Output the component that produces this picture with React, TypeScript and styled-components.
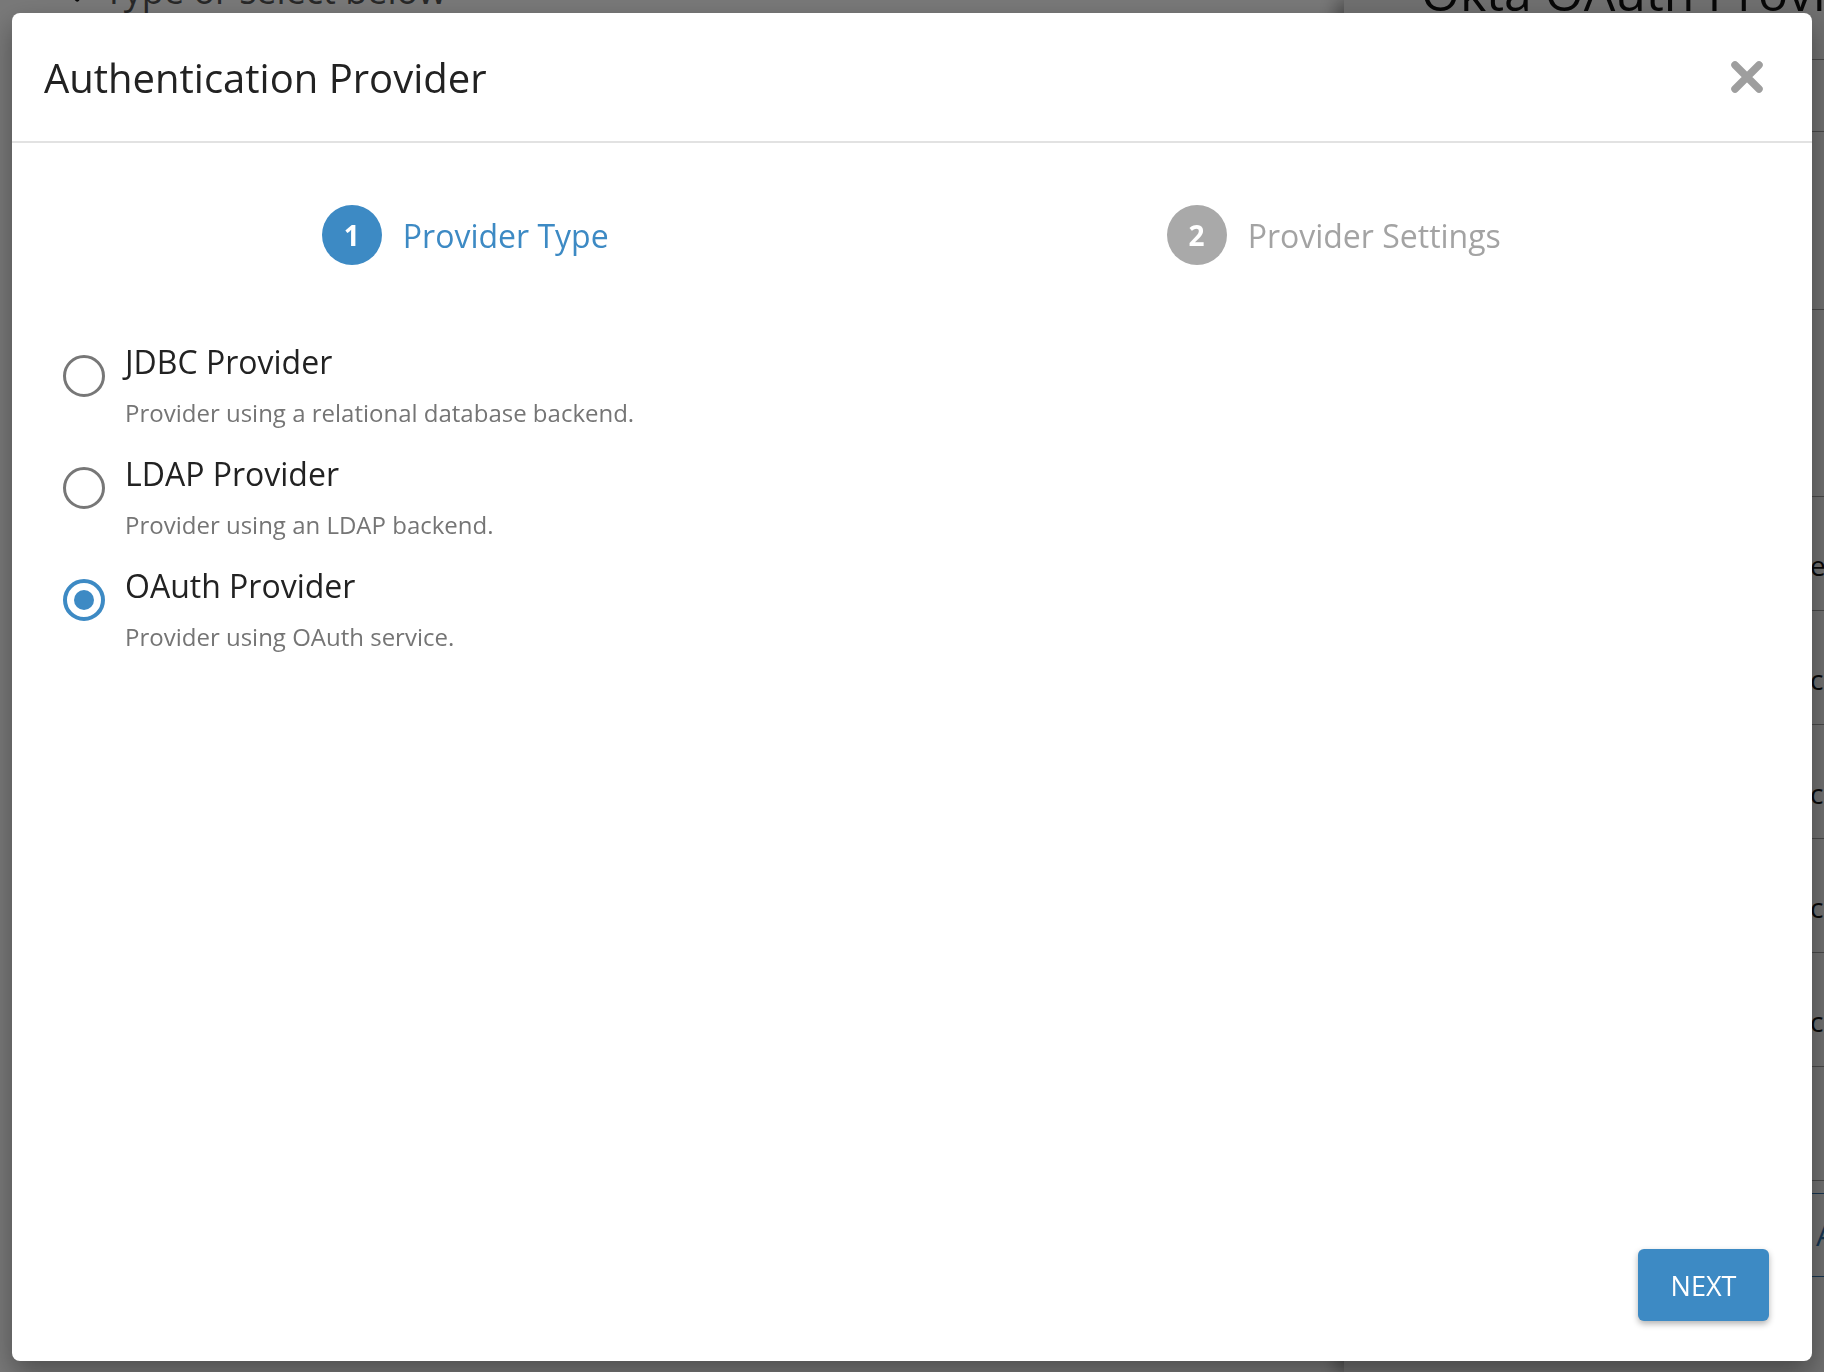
import React, { FC, useState } from 'react'
import styled, { createGlobalStyle } from 'styled-components'
import { ChevronLeft } from 'lucide-react'

const BLUE = '#3d8ac4'

const GlobalStyle = createGlobalStyle`
  html, body {
    margin: 0;
    padding: 0;
    overflow: hidden;
  }
  body {
    font-family: 'Open Sans', 'Liberation Sans', sans-serif;
  }
  * {
    box-sizing: border-box;
  }
`

// page underneath the dialog
const Backdrop = styled.div`
  display: flex;
  width: 100vw;
  height: 100vh;
  overflow: hidden;
`
const MainPane = styled.div`
  flex: 1;
  background: #fff;
  padding-left: 56px;
`
const SearchRow = styled.div`
  display: flex;
  align-items: center;
  gap: 14px;
  margin-top: -33px;
  font-size: 36px;
  line-height: 48px;
  color: #555;
  white-space: nowrap;
  svg {
    color: #111;
  }
`
const SidePane = styled.div`
  width: 480px;
  background: #ececec;
  box-shadow: -8px 0 16px rgba(0, 0, 0, 0.35);
  display: flex;
  flex-direction: column;
`
const SideHeading = styled.h2`
  margin: -40px 0 0 77px;
  font-size: 50px;
  line-height: 64px;
  font-weight: 400;
  color: #111;
  white-space: nowrap;
`
const ToolBar = styled.div`
  height: 73px;
  margin-top: 35px;
  border-top: 1px solid #999;
  border-bottom: 1px solid #999;
`
const Section = styled.div`
  height: 178px;
  border-bottom: 1px solid #999;
`
const DetailRow = styled.div<{ $height: number }>`
  display: grid;
  grid-template-columns: 466px 1fr;
  align-items: end;
  height: ${(p) => p.$height}px;
  padding-bottom: 26px;
  border-bottom: 1px solid #999;
  font-size: 28px;
  color: #111;
  white-space: nowrap;
`
const SideAction = styled.div`
  margin: 12px 0 0 464px;
  height: 84px;
  border-top: 1px solid #2f6fa8;
  border-bottom: 1px solid #2f6fa8;
  color: #2f6fa8;
  font-size: 30px;
  line-height: 82px;
  padding-left: 8px;
`
const Overlay = styled.div`
  position: fixed;
  inset: 0;
  background: rgba(0, 0, 0, 0.53);
`

// dialog
const Dialog = styled.div`
  position: fixed;
  top: 13px;
  left: 12px;
  right: 12px;
  bottom: 11px;
  background: #fff;
  border-radius: 8px;
  box-shadow: 0 12px 28px rgba(0, 0, 0, 0.35);
  display: flex;
  flex-direction: column;
  overflow: hidden;
`
const Header = styled.div`
  flex: none;
  height: 130px;
  display: flex;
  align-items: center;
  justify-content: space-between;
  padding: 0 48px 0 32px;
  border-bottom: 2px solid #e2e2e2;
`
const Title = styled.h1`
  margin: 0;
  font-size: 40px;
  font-weight: 400;
  color: #222;
`
const CloseButton = styled.button`
  width: 34px;
  height: 34px;
  padding: 0;
  border: none;
  background: none;
  cursor: pointer;
  display: flex;
`
const Stepper = styled.div`
  display: grid;
  grid-template-columns: 1fr 1fr;
  margin: 62px 44px 0 19px;
`
const Step = styled.div`
  display: flex;
  align-items: center;
  justify-content: center;
  gap: 21px;
`
const StepBadge = styled.div<{ $active: boolean }>`
  width: 60px;
  height: 60px;
  border-radius: 50%;
  display: grid;
  place-items: center;
  background: ${(p) => (p.$active ? BLUE : '#a9a9a9')};
  color: #fff;
  font-size: 28px;
  font-weight: 700;
`
const StepLabel = styled.span<{ $active: boolean }>`
  font-size: 32px;
  color: ${(p) => (p.$active ? BLUE : '#a3a3a3')};
`
const OptionList = styled.div`
  display: flex;
  flex-direction: column;
  margin-top: 76px;
  padding-left: 51px;
`
const Option = styled.label`
  display: flex;
  gap: 20px;
  padding-bottom: 24px;
  cursor: pointer;
`
const Radio = styled.span<{ $checked: boolean }>`
  flex: none;
  width: 42px;
  height: 42px;
  margin-top: 14px;
  border-radius: 50%;
  border: ${(p) => (p.$checked ? `4px solid ${BLUE}` : '3px solid #777')};
  display: grid;
  place-items: center;
  &::after {
    content: '';
    width: 20px;
    height: 20px;
    border-radius: 50%;
    background: ${(p) => (p.$checked ? BLUE : 'transparent')};
  }
`
const OptionText = styled.div`
  display: flex;
  flex-direction: column;
`
const OptionLabel = styled.span`
  font-size: 32px;
  line-height: 42px;
  color: #222;
`
const OptionDesc = styled.span`
  margin-top: 14px;
  font-size: 24px;
  line-height: 32px;
  color: #757575;
`
const Footer = styled.div`
  margin-top: auto;
  display: flex;
  justify-content: flex-end;
  padding: 0 43px 40px 0;
`
const NextButton = styled.button`
  width: 131px;
  height: 72px;
  border: none;
  border-radius: 6px;
  background: ${BLUE};
  box-shadow: 0 3px 6px rgba(0, 0, 0, 0.3);
  color: #fff;
  font-family: inherit;
  font-size: 27px;
  cursor: pointer;
`

type ProviderOption = {
  value: string
  label: string
  description: string
}

const providers: ProviderOption[] = [
  { value: 'jdbc', label: 'JDBC Provider', description: 'Provider using a relational database backend.' },
  { value: 'ldap', label: 'LDAP Provider', description: 'Provider using an LDAP backend.' },
  { value: 'oauth', label: 'OAuth Provider', description: 'Provider using OAuth service.' },
]

const detailRows = [
  { label: 'Description', value: '', height: 187 },
  { label: 'Enabled', value: 'enabled', height: 114 },
  { label: 'Client ID', value: 'client id', height: 114 },
  { label: 'Client Secret', value: 'client secret', height: 114 },
  { label: 'Callback', value: 'callback url', height: 114 },
  { label: 'Claims', value: 'claims', height: 114 },
  { label: 'Groups', value: '', height: 114 },
]

const CloseIcon: FC = () => (
  <svg width="34" height="34" viewBox="0 0 34 34">
    <path d="M5 5 L29 29 M29 5 L5 29" stroke="#9e9e9e" strokeWidth="7.5" strokeLinecap="round" />
  </svg>
)

const App: FC = () => {
  const [selected, setSelected] = useState('oauth')

  return (
    <>
      <GlobalStyle />
      <Backdrop>
        <MainPane>
          <SearchRow>
            <ChevronLeft size={34} strokeWidth={3} />
            Type or select below
          </SearchRow>
        </MainPane>
        <SidePane>
          <SideHeading>Okta OAuth Provider</SideHeading>
          <ToolBar />
          <Section />
          {detailRows.map((row) => (
            <DetailRow key={row.label} $height={row.height}>
              <span>{row.label}</span>
              <span>{row.value}</span>
            </DetailRow>
          ))}
          <SideAction>Add</SideAction>
        </SidePane>
      </Backdrop>
      <Overlay />
      <Dialog role="dialog">
        <Header>
          <Title>Authentication Provider</Title>
          <CloseButton aria-label="Close">
            <CloseIcon />
          </CloseButton>
        </Header>
        <Stepper>
          <Step>
            <StepBadge $active>1</StepBadge>
            <StepLabel $active>Provider Type</StepLabel>
          </Step>
          <Step>
            <StepBadge $active={false}>2</StepBadge>
            <StepLabel $active={false}>Provider Settings</StepLabel>
          </Step>
        </Stepper>
        <OptionList>
          {providers.map((p) => (
            <Option key={p.value} onClick={() => setSelected(p.value)}>
              <Radio $checked={selected === p.value} />
              <OptionText>
                <OptionLabel>{p.label}</OptionLabel>
                <OptionDesc>{p.description}</OptionDesc>
              </OptionText>
            </Option>
          ))}
        </OptionList>
        <Footer>
          <NextButton>NEXT</NextButton>
        </Footer>
      </Dialog>
    </>
  )
}

export default App
